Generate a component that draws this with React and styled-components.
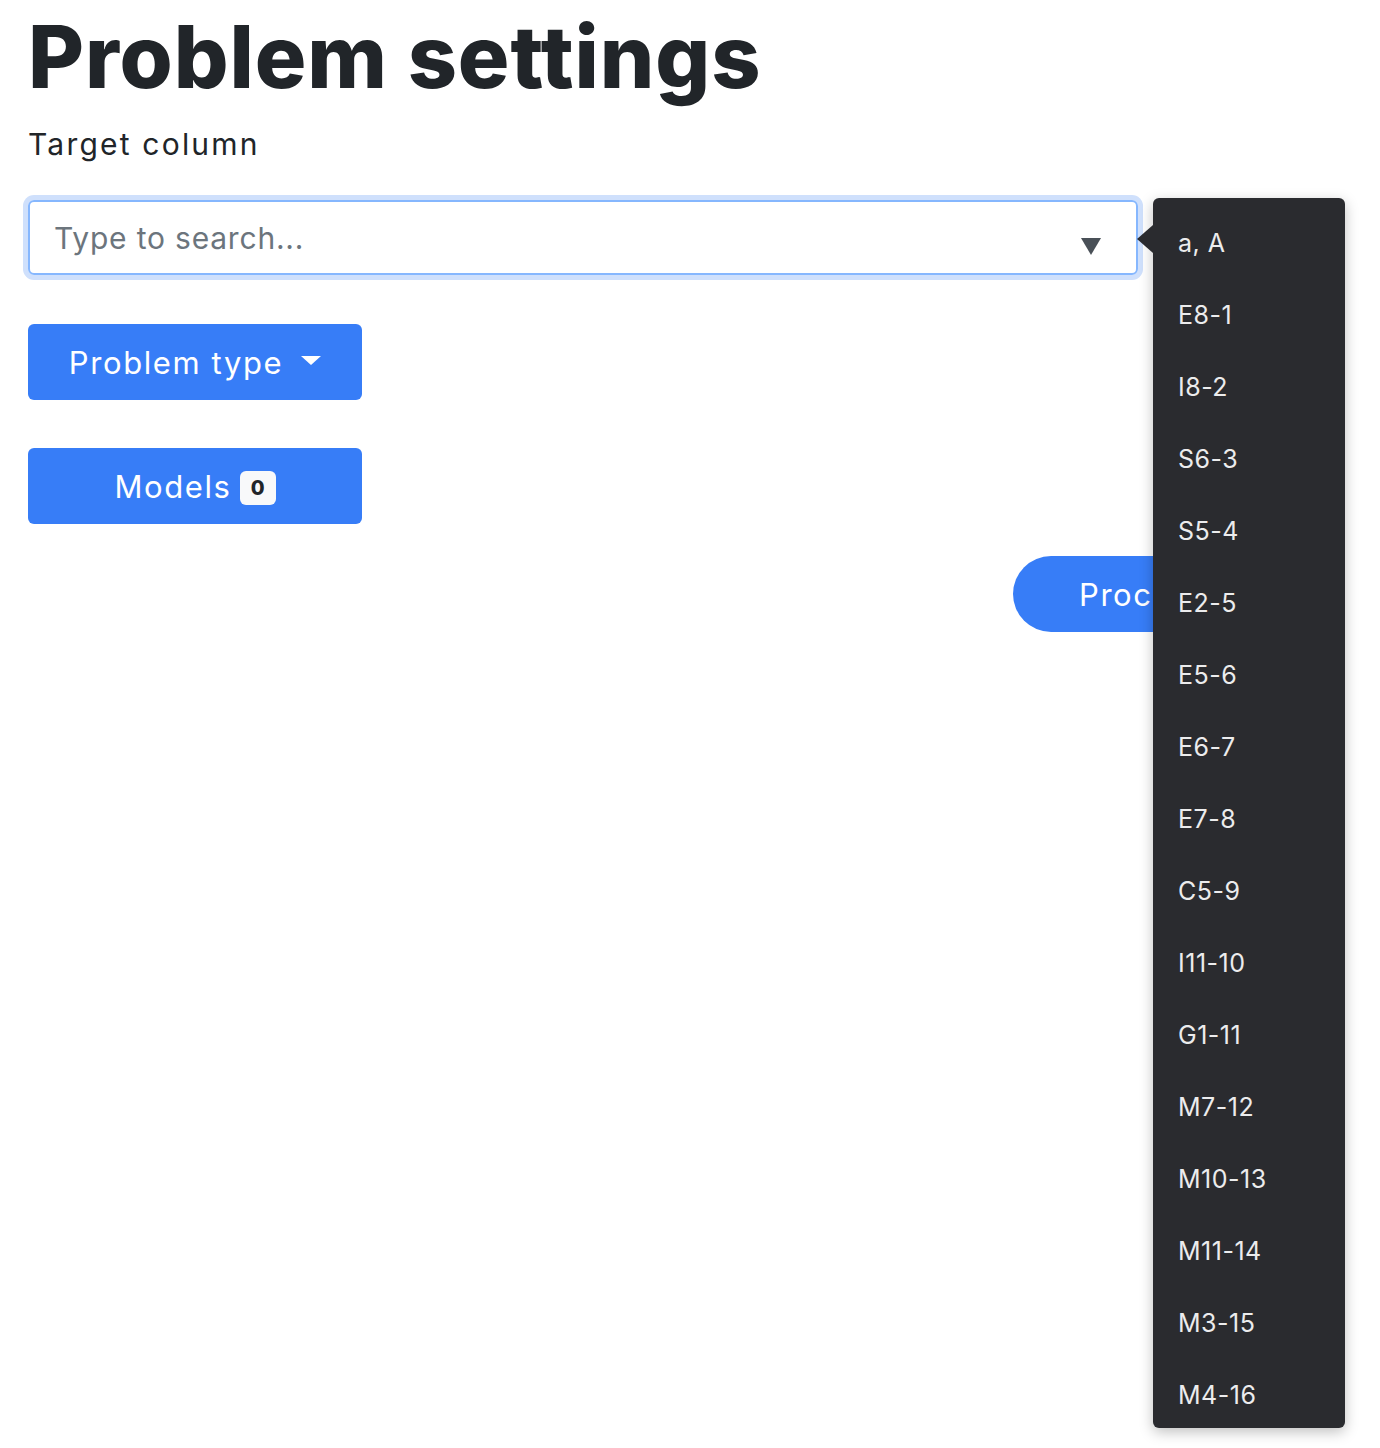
import React from 'react';
import styled, { createGlobalStyle } from 'styled-components';

const GlobalStyle = createGlobalStyle`
  body {
    margin: 0;
    background: #fff;
    font-family: Inter, "Noto Sans", sans-serif;
    color: #212529;
  }
`;

const Page = styled.div`
  padding: 0 28px;
  height: 1448px;
  overflow: hidden;
`;

const Title = styled.h1`
  margin: 0;
  padding-top: 14px;
  font-size: 86px;
  font-weight: 800;
  line-height: 1;
  letter-spacing: 0.9px;
  color: #212529;
`;

const Label = styled.div`
  margin-top: 26px;
  font-size: 30px;
  line-height: 1.2;
  letter-spacing: 2.2px;
  color: #212529;
`;

const SearchWrap = styled.div`
  position: relative;
  width: 1110px;
  margin-top: 38px;
`;

const SearchBox = styled.div`
  display: flex;
  align-items: center;
  justify-content: space-between;
  height: 75px;
  box-sizing: border-box;
  padding: 0 35px 0 24px;
  border: 2px solid #86b7fe;
  border-radius: 6px;
  box-shadow: 0 0 0 5px #cfe0fc;
`;

const Placeholder = styled.span`
  font-size: 30px;
  letter-spacing: 0.8px;
  color: #6c757d;
`;

const Caret = styled.span`
  width: 0;
  height: 0;
  margin-top: 17px;
  border-left: 10px solid transparent;
  border-right: 10px solid transparent;
  border-top: 17px solid #495057;
`;

const Menu = styled.div`
  position: absolute;
  top: -2px;
  left: 1125px;
  width: 192px;
  padding: 0 0 6px;
  background: #2a2b2f;
  border-radius: 6px;
  box-shadow: 0 4px 14px rgba(0, 0, 0, 0.25);
  z-index: 10;

  &::before {
    content: '';
    position: absolute;
    left: -16px;
    top: 27px;
    border-top: 14px solid transparent;
    border-bottom: 14px solid transparent;
    border-right: 16px solid #2a2b2f;
  }
`;

const MenuItem = styled.div`
  height: 72px;
  box-sizing: border-box;
  padding: 18px 0 0 25px;
  display: flex;
  align-items: center;
  font-family: Inter, Roboto, sans-serif;
  font-size: 25px;
  letter-spacing: 0.5px;
  color: #ececed;
`;

const ActionButton = styled.button`
  display: flex;
  align-items: center;
  justify-content: center;
  gap: 8px;
  width: 334px;
  height: 76px;
  margin-top: ${(p) => p.$top}px;
  border: none;
  border-radius: 6px;
  background: #377df7;
  color: #fff;
  font-family: Inter, "Noto Sans", sans-serif;
  font-size: 31px;
  letter-spacing: 1.6px;
  padding: 0;
`;

const DownCaret = styled.span`
  width: 0;
  height: 0;
  margin-left: 10px;
  margin-top: -4px;
  border-left: 10px solid transparent;
  border-right: 10px solid transparent;
  border-top: 9px solid #fff;
`;

const Badge = styled.span`
  display: inline-flex;
  align-items: center;
  justify-content: center;
  width: 36px;
  height: 34px;
  margin-top: 4px;
  border-radius: 6px;
  background: #f8f9fa;
  color: #212529;
  font-size: 20px;
  font-weight: 800;
  letter-spacing: 0;
`;

const ProceedRow = styled.div`
  display: flex;
  justify-content: flex-end;
  width: 1250px;
  margin-top: 32px;
`;

const PillButton = styled.button`
  height: 76px;
  padding: 0 66px;
  border: none;
  border-radius: 38px;
  background: #377df7;
  color: #fff;
  font-family: Inter, "Noto Sans", sans-serif;
  font-size: 31px;
  letter-spacing: 1.5px;
`;

const items = [
  'a, A', 'E8-1', 'I8-2', 'S6-3', 'S5-4', 'E2-5', 'E5-6', 'E6-7', 'E7-8',
  'C5-9', 'I11-10', 'G1-11', 'M7-12', 'M10-13', 'M11-14', 'M3-15', 'M4-16',
];

export default function App() {
  return (
    <>
      <GlobalStyle />
      <Page>
        <Title>Problem settings</Title>
        <Label>Target column</Label>
        <SearchWrap>
          <SearchBox>
            <Placeholder>Type to search...</Placeholder>
            <Caret />
          </SearchBox>
          <Menu>
            {items.map((it) => (
              <MenuItem key={it}>{it}</MenuItem>
            ))}
          </Menu>
        </SearchWrap>
        <ActionButton $top={49}>
          Problem type <DownCaret />
        </ActionButton>
        <ActionButton $top={48}>
          Models <Badge>0</Badge>
        </ActionButton>
        <ProceedRow>
          <PillButton>Proceed</PillButton>
        </ProceedRow>
      </Page>
    </>
  );
}
